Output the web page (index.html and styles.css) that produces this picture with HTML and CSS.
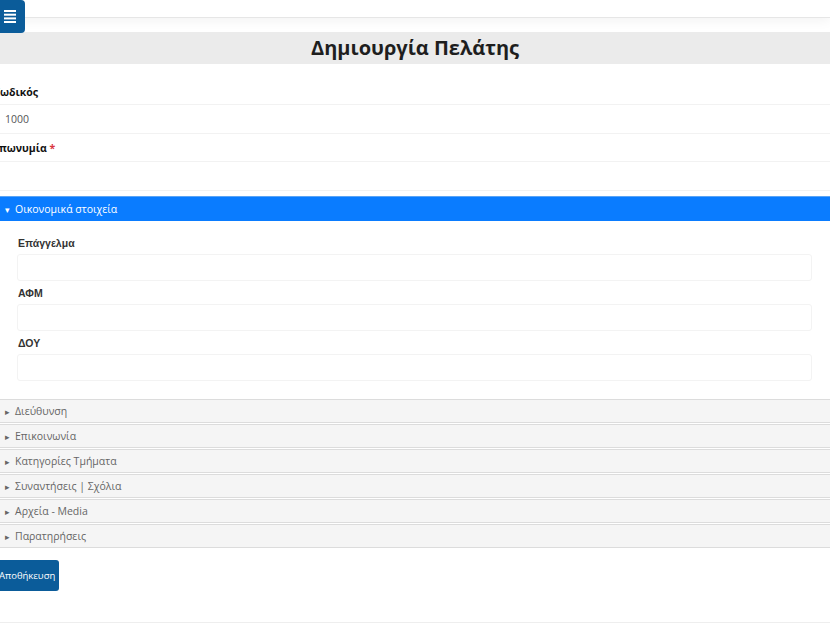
FILE: index.html
```html
<!DOCTYPE html>
<html lang="el">
<head>
    <meta charset="UTF-8">
    <meta name="viewport" content="width=device-width, initial-scale=1.0">
    <title>Δημιουργία Πελάτης</title>
    <link rel="stylesheet" href="styles.css">
</head>
<body>

    <!-- Μπάρα κορυφής με κουμπί μενού -->
    <header class="topbar">
        <button class="menu-btn" type="button" aria-label="Μενού">
            <svg width="12" height="13" viewBox="0 0 12 13">
                <rect x="0" y="0" width="12" height="2" fill="#fff"/>
                <rect x="0" y="3.7" width="12" height="2" fill="#fff"/>
                <rect x="0" y="7.4" width="12" height="2" fill="#fff"/>
                <rect x="0" y="11" width="12" height="2" fill="#fff"/>
            </svg>
        </button>
    </header>

    <h2 class="page-title">Δημιουργία Πελάτης</h2>

    <form class="customer-form">
        <div class="field">
            <label class="field-label">Κωδικός</label>
            <input class="field-input" type="text" value="1000">
        </div>
        <div class="field">
            <label class="field-label">Επωνυμία <span class="required">*</span></label>
            <input class="field-input" type="text">
        </div>

        <!-- Ενότητες -->
        <div class="accordion">
            <div class="acc-header acc-open"><span class="caret">&#9662;</span>Οικονομικά στοιχεία</div>
            <div class="acc-body">
                <div class="sub-field">
                    <label>Επάγγελμα</label>
                    <input type="text">
                </div>
                <div class="sub-field">
                    <label>ΑΦΜ</label>
                    <input type="text">
                </div>
                <div class="sub-field">
                    <label>ΔΟΥ</label>
                    <input type="text">
                </div>
            </div>

            <div class="acc-header"><span class="caret">&#9656;</span>Διεύθυνση</div>
            <div class="acc-header"><span class="caret">&#9656;</span>Επικοινωνία</div>
            <div class="acc-header"><span class="caret">&#9656;</span>Κατηγορίες Τμήματα</div>
            <div class="acc-header"><span class="caret">&#9656;</span>Συναντήσεις | Σχόλια</div>
            <div class="acc-header"><span class="caret">&#9656;</span>Αρχεία - Media</div>
            <div class="acc-header"><span class="caret">&#9656;</span>Παρατηρήσεις</div>
        </div>

        <button class="save-btn" type="button">Αποθήκευση</button>
    </form>

    <footer class="page-footer"></footer>

</body>
</html>
```

FILE: styles.css
```css
/* Γενικά */
body {
    font-family: "Open Sans", "Noto Sans", sans-serif;
    background-color: #fff;
    margin: 0;
    padding: 0;
    overflow: hidden;
    color: #222;
}

/* Μπάρα κορυφής */
.topbar {
    position: relative;
    height: 17px;
    background: #fff;
    border-bottom: 1px solid #e6e6e6;
    box-shadow: 0 3px 12px rgba(0, 0, 0, 0.05);
}
.menu-btn {
    position: absolute;
    left: 0;
    top: 0;
    width: 25px;
    height: 33px;
    padding: 0 0 0 4px;
    border: none;
    border-radius: 0 4px 4px 0;
    background-color: #0b5c9a;
    display: flex;
    align-items: center;
    z-index: 2;
}

/* Τίτλος */
.page-title {
    margin: 14px 0 0;
    height: 32px;
    line-height: 32px;
    background-color: #ebebeb;
    text-align: center;
    font-size: 20px;
    font-weight: 700;
    color: #1e1e1e;
}

/* Φόρμα */
.customer-form {
    margin-left: -7px;
    padding-top: 21px;
}
.field-label {
    display: block;
    font-size: 10.5px;
    font-weight: 700;
    line-height: 15px;
    color: #111;
}
.required {
    color: #d9363e;
}
.field-input {
    display: block;
    box-sizing: border-box;
    width: calc(100% + 7px);
    height: 30px;
    margin: 4px 0 7px;
    padding: 0 12px;
    border: none;
    border-top: 1px solid #f2f2f2;
    border-bottom: 1px solid #f2f2f2;
    font-family: "Open Sans", sans-serif;
    font-size: 10.5px;
    color: #555;
    background: #fff;
}
.field + .field .field-input {
    margin: 5px 0 5px;
}

/* Ενότητες */
.accordion {
    margin-left: 7px;
}
.acc-header {
    height: 22px;
    line-height: 22px;
    padding-left: 5px;
    background-color: #f5f5f5;
    border-top: 1px solid #dcdcdc;
    border-bottom: 1px solid #dcdcdc;
    margin-bottom: 1px;
    font-size: 10.5px;
    color: #666;
}
.acc-header .caret {
    display: inline-block;
    width: 10px;
    font-size: 9px;
}
.acc-open {
    height: 24px;
    line-height: 24px;
    background-color: #0a7cff;
    border: none;
    border-top: 1px solid #5aa4f5;
    color: #fff;
    margin-bottom: 0;
}
.acc-body {
    padding: 16px 18px 12px 17px;
}
.sub-field label {
    display: block;
    padding-left: 1px;
    font-family: "Liberation Sans", Arial, sans-serif;
    font-size: 10.5px;
    font-weight: 700;
    line-height: 12px;
    color: #333;
}
.sub-field input {
    display: block;
    box-sizing: border-box;
    width: 100%;
    height: 27px;
    margin: 5px 0 6px;
    border: 1px solid #f3f3f3;
    border-radius: 3px;
    background: #fff;
}

/* Κουμπί αποθήκευσης */
.save-btn {
    margin-top: 11px;
    height: 31px;
    padding: 0 4px;
    margin-left: 2px;
    border: none;
    border-radius: 3px;
    background-color: #0b5c9a;
    color: #fff;
    font-family: "Open Sans", sans-serif;
    font-size: 9.5px;
}

/* Υποσέλιδο */
.page-footer {
    margin-top: 31px;
    border-top: 1px solid #eeeeee;
    height: 20px;
}
```
